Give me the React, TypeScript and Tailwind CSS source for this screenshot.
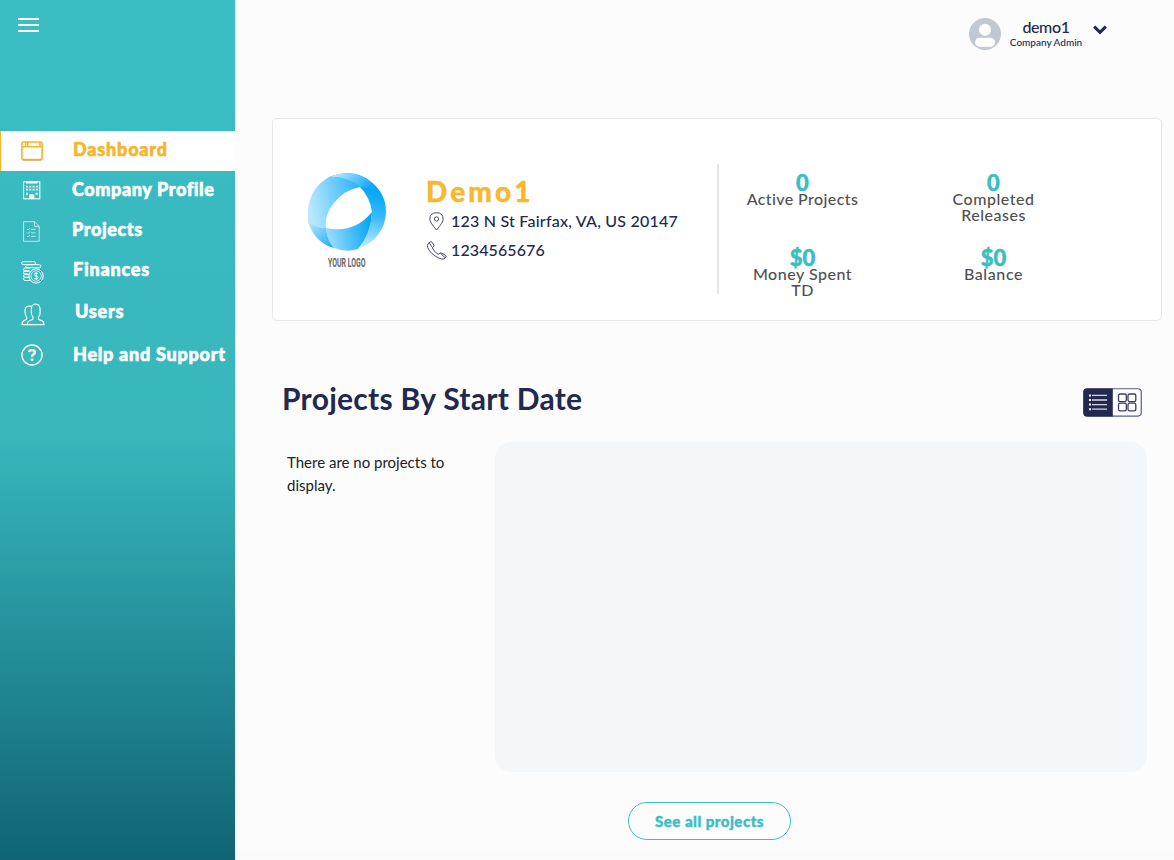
import React from "react";

type IconProps = { className?: string };

const WindowIcon = ({ className }: IconProps) => (
  <svg className={className} width="22" height="20" viewBox="0 0 22 20" fill="none" stroke="#f6b62b" strokeWidth="1.6">
    <rect x="0.9" y="1" width="20.2" height="17.6" rx="1.6" />
    <path d="M1 5.8h20M4.6 1v5M6.8 1v5M19 1v5" />
    <path d="M1.6 19.2h18.8" stroke="#c2a368" strokeWidth="0.8" />
  </svg>
);

const BuildingIcon = ({ className }: IconProps) => (
  <svg className={className} width="18" height="19" viewBox="0 0 18 19" fill="none" stroke="#fff">
    <rect x="0.6" y="0.8" width="16.2" height="17" strokeWidth="1.1" />
    <path d="M3 1.6h11.5" strokeWidth="1.8" />
    <path d="M3 5.7h12M3 8.7h12" strokeWidth="1.8" strokeDasharray="2 1.3" />
    <path d="M3 12.7h2M12.6 12.7h2" strokeWidth="2" />
    <path d="M6.3 18v-4.6h5V18z" fill="#fff" stroke="none" />
  </svg>
);

const ListIcon = ({ className }: IconProps) => (
  <svg className={className} width="17" height="21" viewBox="0 0 17 21" fill="none" stroke="#fff" strokeOpacity="0.72" strokeWidth="0.9">
    <path d="M11.5.7H.6v19.6h15.6V5.4zM11.5.7v4.7h4.7" />
    <path d="M4 8l1 1 2-2M4 11.5l1 1 2-2M4 15l1 1 2-2M8 8.3h4.6M8 11.8h4.6M8 15.3h4.6" />
  </svg>
);

const CoinsIcon = ({ className }: IconProps) => (
  <svg className={className} width="23" height="23" viewBox="0 0 23 23" fill="none" stroke="#fff" strokeWidth="1">
    <rect x="0.7" y="0.7" width="13.6" height="3" rx="1.2" />
    <path d="M5 3.7h13.5q1.4 0 1.4 1.5T18.5 6.7H6Q4.7 6.7 4.7 5" />
    <path d="M9 7H4Q2.6 7 2.6 8.5T4 10h5M8 10H4q-1.4 0-1.4 1.6T4 13.2h3.5M7.5 13.2H4q-1.4 0-1.4 1.6t1.4 1.5h4M8 16.3H4q-1.4 0-1.4 1.6T4 19.5h6" />
    <circle cx="15.1" cy="15" r="7.1" />
    <circle cx="15.1" cy="15" r="5.2" strokeWidth=".7" />
    <path d="M17 13q-.4-1-1.8-1-1.8 0-1.8 1.4t1.8 1.6q1.9.2 1.9 1.6T15.2 18q-1.6 0-2-1.1M15.2 11v8" strokeWidth=".85" />
  </svg>
);

const UsersIcon = ({ className }: IconProps) => (
  <svg className={className} width="24" height="23" viewBox="0 0 24 23" fill="none" stroke="#fff" strokeWidth="1.15">
    <path d="M6.6 21.6q-.5-3.7 3.7-4.6 2.1-.6 1.8-2.8-2-2.1-1.8-5.2Q9.5 1 14.6 1q5 0 4.6 7.7.1 3.3-1.8 5.6-.3 2.2 1.9 2.8 3.9 1 3.7 4.5z" />
    <path d="M10.4 3.4Q8.7 2.9 7 3.4 3.8 3.5 4 9q.2 3.7 1.7 5.4.3 2.2-1.8 2.8Q.9 18.4 1 21.6h5.5" />
  </svg>
);

const HelpIcon = ({ className }: IconProps) => (
  <svg className={className} width="22" height="22" viewBox="0 0 23 23" fill="none" stroke="#fff">
    <circle cx="11.5" cy="11.5" r="10.5" strokeWidth="1.5" />
    <path d="M8.4 8.6q.2-2.4 3-2.4 3.1 0 3.1 2.5 0 1.2-1.5 2.1-1.4 1-1.4 2.1v.5" strokeWidth="2.6" />
    <circle cx="11.6" cy="16.4" r="1.5" fill="#fff" stroke="none" />
  </svg>
);

const Logo = () => (
  <svg width="78" height="78" viewBox="0 0 78 78">
    <defs>
      <linearGradient id="left" x1="0" y1="0.4" x2="1" y2="0.2">
        <stop offset="0" stopColor="#b9e8ff" />
        <stop offset="1" stopColor="#29b2fa" />
      </linearGradient>
      <linearGradient id="right" x1="0.6" y1="0" x2="0.4" y2="1">
        <stop offset="0.15" stopColor="#00a5f8" />
        <stop offset="0.5" stopColor="#35b9fb" />
        <stop offset="1" stopColor="#d8f3ff" />
      </linearGradient>
      <linearGradient id="base" x1="0" y1="0.5" x2="1" y2="0.3">
        <stop offset="0" stopColor="#9addff" />
        <stop offset="1" stopColor="#00a2f5" />
      </linearGradient>
      <linearGradient id="top" x1="0" y1="0" x2="1" y2="0.3">
        <stop offset="0" stopColor="#d2f1ff" />
        <stop offset="1" stopColor="#13aafb" />
      </linearGradient>
      <linearGradient id="tail" x1="0" y1="0" x2="1" y2="1">
        <stop offset="0" stopColor="#b9e8ff" />
        <stop offset="1" stopColor="#16a9f5" />
      </linearGradient>
    </defs>
    <path d="M22 3.5Q46-5 62 8 78 20 78 39 77 65 50 76 63 61 64 39 62 24 52 14 43 6 22 3.5z" fill="url(#right)" />
    <path d="M22 3.5Q45-5 62 8L68 17 52 14Q42 6 22 3.5z" fill="url(#top)" />
    <path d="M22 3.5Q42 4 52 14 36 17 26 30 16 42 18 55 8 55 0 49-3 17 22 3.5z" fill="url(#left)" />
    <path d="M0 49Q9 55 18 55 19 66 26 75 7 70 0 49z" fill="url(#tail)" />
    <path d="M18 55Q46 61 64 39 63 61 50 76 38 80 26 75 19 68 18 55z" fill="url(#base)" />
  </svg>
);

const PinIcon = () => (
  <svg width="15" height="19" viewBox="0 0 15 19" fill="none" stroke="#3d4268" strokeWidth=".95">
    <path d="M7.5 18Q1 10.5.8 7.2.9.8 7.5.7q6.6.1 6.7 6.5Q14 10.5 7.5 18z" />
    <circle cx="7.5" cy="7" r="2.1" />
  </svg>
);

const PhoneIcon = () => (
  <svg width="20" height="19" viewBox="0 0 20 19" fill="none" stroke="#3d4268" strokeWidth=".95">
    <path d="M1 2.7 3.2.9q1-.6 1.7.3l2 3q.5 1-.3 1.6L5.3 7q1.8 3.9 6 6.4l1.9-1.3q.8-.5 1.5.1l3.9 2.2q1 .7.4 1.5l-1.8 2q-2 .9-5.5-.9Q3.2 12.8.7 6.5.1 4.4 1 2.7z" />
    <path d="M2.2 1.8 5.5 6.7M13.4 12.3l4.7 4.3" />
  </svg>
);

const navItems = [
  { label: "Dashboard", Icon: WindowIcon, row: "h-10 border-l border-[#f6b62b] bg-white text-[#f6b62b]", cell: "ml-5 w-[52px]", text: "pb-1 tracking-[0.8px]", icon: "-mt-px" },
  { label: "Company Profile", Icon: BuildingIcon, row: "h-10 text-white", cell: "ml-[23px] w-[49px]", text: "pb-1 tracking-[0.61px]", icon: "-mt-0.5" },
  { label: "Projects", Icon: ListIcon, row: "h-10 text-white", cell: "ml-[23px] w-[49px]", text: "pb-1 tracking-[0.6px]", icon: "" },
  { label: "Finances", Icon: CoinsIcon, row: "h-10 text-white", cell: "ml-[21px] w-[52px]", text: "pb-1 tracking-[0.8px]", icon: "mt-0.5" },
  { label: "Users", Icon: UsersIcon, row: "h-[42px] text-white", cell: "ml-[21px] w-[54px]", text: "pb-0.5 tracking-[0.75px]", icon: "mt-1" },
  { label: "Help and Support", Icon: HelpIcon, row: "h-11 text-white", cell: "ml-[21px] w-[52px]", text: "pb-0.5 tracking-[0.74px]", icon: "" },
];

function Sidebar() {
  return (
    <aside className="h-[860px] w-[235px] shrink-0 bg-[linear-gradient(180deg,#3abec4_0%,#38b6bc_51%,#2fa8b0_60%,#238b98_77%,#106474_100%)]">
      <button className="ml-[18px] mt-[18px] flex h-[14px] w-[21px] flex-col justify-between" aria-label="Menu">
        <span className="h-0.5 w-full bg-white" />
        <span className="h-0.5 w-full bg-white" />
        <span className="h-0.5 w-full bg-white" />
      </button>
      <nav className="mt-[99px]">
        {navItems.map(({ label, Icon, row, cell, text, icon }) => (
          <a key={label} className={`flex items-center ${row}`}>
            <span className={`flex shrink-0 ${cell}`}>
              <Icon className={icon} />
            </span>
            <span className={`whitespace-nowrap text-[18px] font-black leading-6 [-webkit-text-stroke:0.6px_currentColor] ${text}`}>
              {label}
            </span>
          </a>
        ))}
      </nav>
    </aside>
  );
}

const stats = [
  { value: "0", lines: ["Active Projects"], tracking: "tracking-[0.4px]" },
  { value: "0", lines: ["Completed", "Releases"], tracking: "tracking-[0.5px]" },
  { value: "$0", lines: ["Money Spent", "TD"], tracking: "tracking-[0.5px]" },
  { value: "$0", lines: ["Balance"], tracking: "tracking-[0.6px]" },
];

export default function App() {
  return (
    <div className="flex h-[860px] w-[1174px] overflow-hidden bg-[#fcfcfc] font-['Lato','Open_Sans',sans-serif]">
      <Sidebar />
      <main className="flex min-w-0 flex-1 flex-col">
        <header className="flex h-[118px] shrink-0 items-start justify-end pr-[67px] pt-[18px]">
          <svg width="32" height="32" viewBox="0 0 32 32">
            <circle cx="16" cy="16" r="16" fill="#c2c8d2" />
            <circle cx="16" cy="11.8" r="6" fill="#fff" />
            <rect x="6.2" y="19.7" width="19.8" height="9" rx="4.5" fill="#fff" />
          </svg>
          <div className="-mt-px ml-2 w-[74px] text-center font-medium text-[#22284f]">
            <div className="whitespace-nowrap text-[16px] leading-5 tracking-[-0.4px]">demo1</div>
            <div className="whitespace-nowrap text-[10px] leading-[10px]">Company Admin</div>
          </div>
          <svg className="ml-[10px] mt-[7px]" width="14" height="10" viewBox="0 0 14 10" fill="none" stroke="#22284f" strokeWidth="3">
            <path d="M1.2 1.7 7 7.3l5.8-5.6" />
          </svg>
        </header>

        <section className="ml-[37px] flex h-[203px] w-[890px] shrink-0 rounded-[5px] border border-[#e5e7eb] bg-white">
          <div className="ml-[35px] mt-[54px] flex w-[78px] shrink-0 flex-col items-center">
            <Logo />
            <span className="mt-1.5 h-[14px] whitespace-nowrap font-['Roboto',sans-serif] text-[11px] font-bold leading-[14px] text-[#666]">
              <span className="block scale-x-[0.63] scale-y-110">YOUR LOGO</span>
            </span>
          </div>
          <div className="ml-10 mt-[54px] w-[291px] shrink-0 text-[#22284f]">
            <h1 className="h-9 text-[28px] font-black leading-9 tracking-[3.1px] text-[#f9b72b] [-webkit-text-stroke:0.4px_currentColor]">Demo1</h1>
            <div className="mt-px flex h-[22px] items-center">
              <span className="flex w-[25px] pl-[3px]"><PinIcon /></span>
              <span className="whitespace-nowrap text-[16px] font-medium tracking-[0.22px]">123 N St Fairfax, VA, US 20147</span>
            </div>
            <div className="mt-[7px] flex h-[22px] items-center">
              <span className="flex w-[25px] pl-px"><PhoneIcon /></span>
              <span className="whitespace-nowrap text-[16px] font-medium tracking-[0.1px]">1234565676</span>
            </div>
          </div>
          <div className="mt-[45px] h-[130px] w-0.5 shrink-0 bg-[#e5e6ea]" />
          <div className="-ml-3 mt-[53px] grid h-[140px] w-[382px] shrink-0 grid-cols-2 grid-rows-[75px_65px]">
            {stats.map((s) => (
              <div key={s.lines[0]} className="text-center">
                <div className="h-[19px] text-[22px] font-black leading-[22px] text-[#3abec4] [-webkit-text-stroke:0.5px_currentColor]">{s.value}</div>
                {s.lines.map((l) => (
                  <div key={l} className={`whitespace-nowrap text-[16px] font-medium leading-4 text-[#505052] ${s.tracking}`}>{l}</div>
                ))}
              </div>
            ))}
          </div>
        </section>

        <div className="ml-[47px] mr-8 mt-[57px] flex h-12 shrink-0 items-center justify-between">
          <h2 className="whitespace-nowrap pb-2 text-[30px] font-bold tracking-[0.28px] text-[#22284f]">Projects By Start Date</h2>
          <svg width="59" height="29" viewBox="0 0 59 29">
            <rect x="0.75" y="0.75" width="57.5" height="27.3" rx="3.5" fill="#fff" stroke="#595d80" strokeWidth="1.2" />
            <path d="M29.8.4H4Q.4.4.4 4v21q0 3.5 3.6 3.5h25.8z" fill="#22284f" />
            <path d="M6 7.4h2M6 12h2M6 16.6h2M6 21.2h2" stroke="#fff" strokeWidth="2" />
            <path d="M9 7.4h15M9 12h15M9 16.6h15M9 21.2h15" stroke="#d5d6df" strokeWidth="1.3" />
            <g fill="none" stroke="#393e64" strokeWidth="1.3">
              <rect x="35.5" y="6" width="7.8" height="7.6" rx="1.6" />
              <rect x="45" y="6" width="7.8" height="7.6" rx="1.6" />
              <rect x="35.5" y="15.2" width="7.8" height="7.6" rx="1.6" />
              <rect x="45" y="15.2" width="7.8" height="7.6" rx="1.6" />
            </g>
          </svg>
        </div>

        <div className="ml-[52px] mt-4 flex h-[330px] shrink-0">
          <p className="w-[208px] pt-[9px] text-[15px] leading-[23px] text-[#202124]">
            There are no projects to
            <br />
            display.
          </p>
          <div className="h-[330px] w-[652px] rounded-2xl bg-[#f3f7fa]" />
        </div>

        <div className="flex h-20 shrink-0 items-start pl-[393px] pt-[30px]">
          <button className="h-[38px] w-[163px] shrink-0 rounded-full border border-[#3abec4] text-[15px] font-black tracking-[0.5px] text-[#3abec4] [-webkit-text-stroke:0.4px_currentColor]">
            See all projects
          </button>
        </div>
        <footer className="h-2 shrink-0 bg-[#fafafa]" />
      </main>
    </div>
  );
}
